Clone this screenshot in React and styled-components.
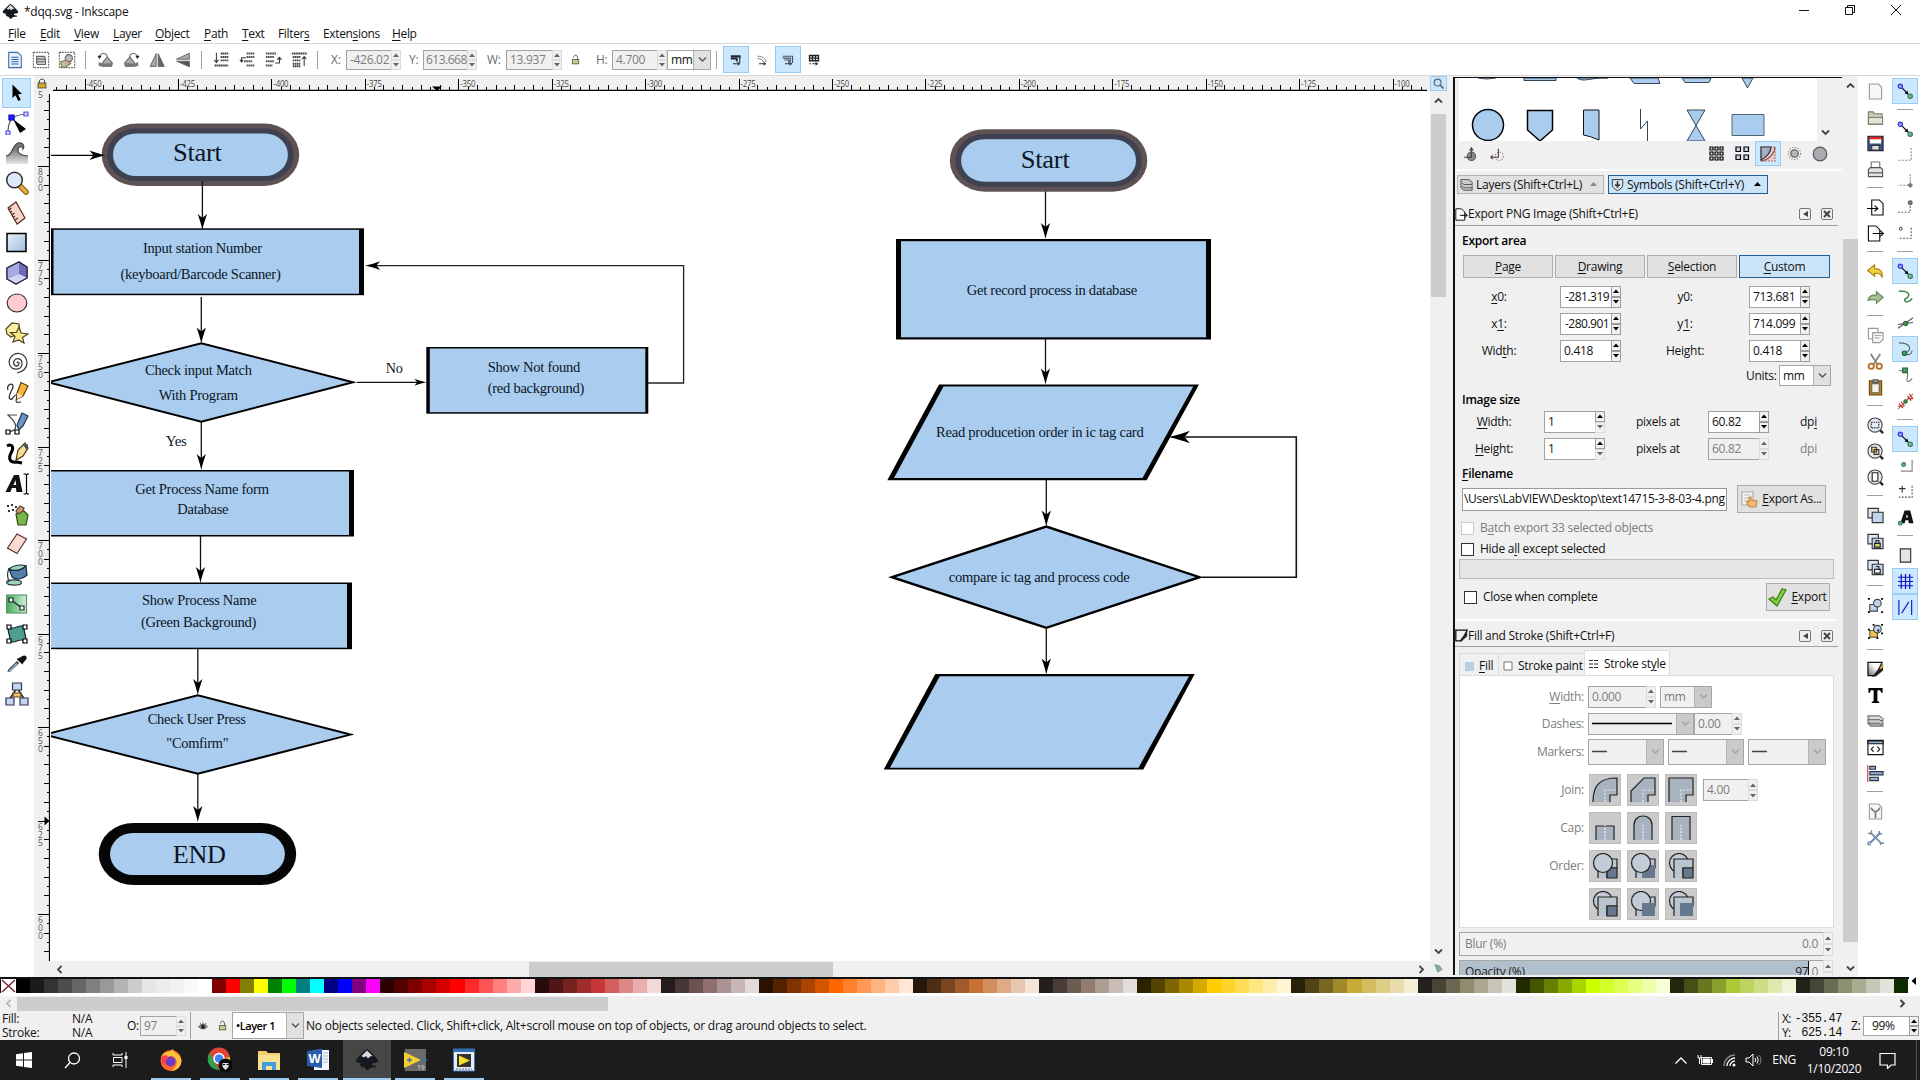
import React from "react";
import styled, { createGlobalStyle, css } from "styled-components";

const UI = '"Open Sans", "Noto Sans", sans-serif';
const BLUE = "#aaccee";

const Global = createGlobalStyle`
  * { box-sizing: border-box; }
  body { margin: 0; background: #fff; overflow: hidden; }
  svg { display: block; flex: none; }
  u { text-decoration-thickness: 1px; text-underline-offset: 2px; }
`;

const Window = styled.div`
  width: 1920px;
  height: 1080px;
  display: flex;
  flex-direction: column;
  overflow: hidden;
  background: #fff;
  font: 12px/16px ${UI};
  letter-spacing: -0.26px;
  color: #111;
  white-space: pre;
`;

/* ---------- title, menu, tool controls ---------- */
const TitleBar = styled.div`
  height: 23px;
  display: flex;
  align-items: center;
  padding-left: 2px;
  gap: 5px;
`;
const WindowButtons = styled.div`
  margin-left: auto;
  margin-right: 18px;
  display: flex;
  gap: 34px;
  padding-bottom: 3px;
`;
const MenuBar = styled.div`
  height: 21px;
  display: flex;
  align-items: center;
  padding: 2px 0 0 8px;
  border-bottom: 1px solid #d7d7d7;
`;
const MenuItem = styled.span`
  width: ${(p) => p.$w}px;
  letter-spacing: -0.35px;
`;
const ControlsBar = styled.div`
  height: 32px;
  display: flex;
  align-items: center;
  border-bottom: 1px solid #d7d7d7;
  padding-left: 2px;
  color: #6d6d6d;
`;
const ToolCell = styled.div`
  width: 26px;
  height: 27px;
  display: flex;
  align-items: center;
  justify-content: center;
  flex: none;
  ${(p) => p.$on && css`background: #cce8ff; border: 1px solid #99cdf5;`}
`;
const VSep = styled.div`
  width: 1px;
  height: ${(p) => p.$h || 18}px;
  background: #a0a0a0;
  margin: 0 ${(p) => p.$r ?? 6}px 0 ${(p) => p.$l ?? 6}px;
  flex: none;
`;
const FieldLabel = styled.span`
  width: ${(p) => p.$w}px;
  flex: none;
`;

/* ---------- generic fields ---------- */
const SpinBox = styled.div`
  display: flex;
  flex: none;
  height: ${(p) => p.$h || 22}px;
`;
const SpinText = styled.div`
  width: ${(p) => p.$w}px;
  height: 100%;
  display: flex;
  align-items: center;
  padding-left: ${(p) => p.$pad ?? 3}px;
  letter-spacing: ${(p) => (p.$tight ? -0.5 : -0.3)}px;
  border: 1px solid #a2a2a2;
  border-right: none;
  background: ${(p) => (p.$off ? "#f0f0f0" : "#fff")};
  color: ${(p) => (p.$off ? "#7d7d7d" : "#111")};
`;
const SpinCol = styled.div`
  width: 10px;
  display: flex;
  flex-direction: column;
  height: 100%;
`;
const SpinBtn = styled.div`
  flex: 1;
  display: flex;
  align-items: center;
  justify-content: center;
  background: #f0f0f0;
  border: 1px solid ${(p) => (p.$off ? "#dcdcdc" : "#9c9c9c")};
  color: ${(p) => (p.$off ? "#666" : "#000")};
`;
const Up = () => <svg width="6" height="4"><path d="M0 4L3 0.5L6 4z" fill="currentColor" /></svg>;
const Down = () => <svg width="6" height="4"><path d="M0 0L3 3.5L6 0z" fill="currentColor" /></svg>;
function Spin({ w, h, v, off, pad, downOff, tight }) {
  return (
    <SpinBox $h={h}>
      <SpinText $w={w} $off={off} $pad={pad} $tight={tight}>{v}</SpinText>
      <SpinCol>
        <SpinBtn $off={off}><Up /></SpinBtn>
        <SpinBtn $off={off || downOff}><Down /></SpinBtn>
      </SpinCol>
    </SpinBox>
  );
}
const ComboBox = styled.div`
  display: flex;
  flex: none;
  width: ${(p) => p.$w}px;
  height: ${(p) => p.$h}px;
  border: 1px solid #a6a6a6;
  background: ${(p) => (p.$off ? "#f0f0f0" : "#fff")};
  color: ${(p) => (p.$off ? "#7d7d7d" : "#111")};
`;
const ComboText = styled.div`
  flex: 1;
  display: flex;
  align-items: center;
  padding-left: 3px;
`;
const ComboBtn = styled.div`
  width: ${(p) => p.$w || 17}px;
  display: flex;
  align-items: center;
  justify-content: center;
  background: ${(p) => (p.$off ? "#cacaca" : "#e1e1e1")};
  border-left: 1px solid #b4b4b4;
  color: ${(p) => (p.$off ? "#a0a0a0" : "#555")};
`;
const Chevron = ({ d = "down", w = 1.4, s = 9 }) => {
  const r = { down: 0, up: 180, left: 90, right: 270 }[d];
  return <svg width={s} height={s} viewBox="0 0 9 9"><path d="M1 2.5L4.5 6L8 2.5" transform={`rotate(${r} 4.5 4.5)`} fill="none" stroke="currentColor" strokeWidth={w} /></svg>;
};
function Combo({ w, h, off, children, bw }) {
  return (
    <ComboBox $w={w} $h={h} $off={off}>
      <ComboText>{children}</ComboText>
      <ComboBtn $off={off} $w={bw}><Chevron /></ComboBtn>
    </ComboBox>
  );
}
const Bold = styled.b`
  font-weight: 600;
  color: #000;
  font-size: ${(p) => (p.$small ? 11 : 12)}px;
  letter-spacing: ${(p) => (p.$small ? -0.45 : -0.26)}px;
`;

/* ---------- icons ---------- */
const Ic = ({ s = 20, v = 20, children }) => (
  <svg width={s} height={s} viewBox={`0 0 ${v} ${v}`} fill="none" stroke="#222" strokeWidth="1.2">{children}</svg>
);
const InkLogo = ({ s = 16 }) => (
  <svg width={s} height={s} viewBox="0 0 24 24">
    <path d="M12 1C9 3 2 10 1 12.500C0.500 14.500 4 15 6 15.500C8 16.500 5 17 6 18.500C8 20 9 18.500 10 20C11 22.500 13 23 14 21C15 19.500 18 20 19 18.500C19 17 15.500 17 17 15.500C19.500 15 23.500 14.500 23 12.500C22 10 15 3 12 1z" fill="#15181c" />
    <path d="M12 2.500L6.500 8L9 9.500L11 8L13 10.500L15 8.500L17.500 8z" fill="#d4dbe4" />
    <path d="M5 16.500h3M17 18.500h4" stroke="#15181c" strokeWidth="1.500" />
  </svg>
);

const toolIcons = [
  <Ic><path d="M5.500 1.500L5.500 15L8.500 12.300L11.300 18L13.800 16.800L11 11.300L15 11z" fill="#000" stroke="none" /></Ic>,
  <Ic s={24} v={24}><path d="M3 22C3 12 5 4 21 3" stroke="#555" /><path d="M4 4h5v5h-5z" fill="#22f" stroke="#00c" /><path d="M1 20h4v4h-4zM19 1h4v4h-4z" fill="#ccf" stroke="#55d" /><path d="M8 8L21 18L15 22z" fill="#000" stroke="none" /></Ic>,
  <Ic s={24} v={24}><path d="M1 15C8 15 6 5 13 2C18 1 20 5 18 8C18 5 14 5 13 8C12 12 17 15 23 15V23H1z" fill="url(#tweak)" stroke="none" /><path d="M1 15C8 15 6 5 13 2C18 1 20 5 18 8C18 5 14 5 13 8C12 12 17 15 23 15" stroke="#444" /><defs><linearGradient id="tweak" x1="0" y1="0" x2="0" y2="1"><stop offset="0.300" stopColor="#777" /><stop offset="1" stopColor="#e6e6e6" /></linearGradient></defs></Ic>,
  <Ic s={24} v={24}><path d="M15 15L21 21" stroke="#7a5a10" strokeWidth="5.500" strokeLinecap="round" /><path d="M15.500 15.500L21 21" stroke="#eda93a" strokeWidth="3.500" strokeLinecap="round" /><circle cx="9.500" cy="9" r="7.800" fill="#dbe9f8" stroke="#333" strokeWidth="1.500" /></Ic>,
  <Ic s={24} v={24}><path d="M3 7L11 1L20 17L12 23z" fill="#f8d6ca" stroke="#5a2d20" /><path d="M3.500 9l3-2M5 11.500l2-1.500M6.500 14l3-2M8 16.500l2-1.500M10 19l3-2" stroke="#5a2d20" /></Ic>,
  <Ic s={22} v={22}><rect x="1" y="1.500" width="19" height="18" fill="url(#rg)" stroke="#000" strokeWidth="1.500" /><defs><linearGradient id="rg" x1="0" y1="0" x2="1" y2="1"><stop offset="0" stopColor="#e8f0f8" /><stop offset="1" stopColor="#9dbcdc" /></linearGradient></defs></Ic>,
  <Ic s={24} v={24}><path d="M2 7L14 1L22 6V17L11 23L2 18z" fill="#9a9ad8" stroke="#223" /><path d="M14 1L22 6V17L14 13z" fill="#6c6cb8" stroke="none" /><path d="M2 18L14 13L22 17L11 23z" fill="#d4d4f6" stroke="none" /><path d="M2 7L14 1L14 13L2 18z" fill="#a9a9e0" stroke="none" /><path d="M2 7L14 1L22 6V17L11 23L2 18z" stroke="#223" /></Ic>,
  <Ic s={22} v={22}><ellipse cx="11" cy="11" rx="9.800" ry="9" fill="#ffcad2" stroke="#333" /></Ic>,
  <Ic s={24} v={24}><path d="M1 8L7 2L14 3L15 12L6 16L2 13z" fill="#fbf0a0" stroke="#4a4420" /><path d="M14 6L16 12L23 13L17.500 16.500L19 22L13.500 19L8 21L10 15.500L5.500 11.500L11.500 11.500z" fill="#fbe88a" stroke="#4a4420" /></Ic>,
  <Ic s={22} v={22}><path d="M11 11C12 9 14 11 12.500 13C10 15.500 6.500 12.500 8 9C10 5 16.500 6.500 16 12C15.500 18 7 19 4 13.500C1 7 7 1 13 1.500C18 2 21 6 21 11C21 16 17 20 11 21" stroke="#333" /></Ic>,
  <Ic s={24} v={24}><path d="M3 9C1 3 9 1 8 6C7 10 2 16 5 18C8 20 9 12 12 14C12 20 8 22 16 21" stroke="#222" /><path d="M12 12L16 1.500L23 5L18 15L12 18z" fill="#f6b73c" stroke="#5c3a08" /><path d="M12 12l6 3l-6 3z" fill="#fbe3bd" stroke="none" /></Ic>,
  <Ic s={24} v={24}><path d="M2 20C14 19 13 12 3 3H12" stroke="#444" /><path d="M1 18h4v4h-4zM10 18h4v4h-4z" fill="#fff" stroke="#000" /><path d="M12 13L17 1L23 4L18 14L14 18z" fill="#6a94c2" stroke="#20364f" /></Ic>,
  <Ic s={24} v={24}><path d="M2 4C8 1 9 6 6 11C3 17 5 21 12 20L17 21" stroke="#000" strokeWidth="3" /><path d="M11 18L13 8L20 1L23 6L18 14z" fill="#f7dd94" stroke="#4a3408" /><path d="M18 3l4 5l1-6z" fill="#33506e" stroke="none" /></Ic>,
  <Ic s={24} v={24}><path d="M9 3h5l3.500 17h-6l-.600-4h-4l-1.500 4H0.500zM10.500 8L8.400 13h2.800z" fill="#111" stroke="none" fillRule="evenodd" /><path d="M18.500 2h2l1 1l1-1h1.500M21.500 3V21M18.500 22h2l1-1l1 1h1.500" stroke="#000" /></Ic>,
  <Ic s={24} v={24}><path d="M2 3h2v2h-2zM6 2h2v2h-2zM10 4h2v2h-2zM3 8h2v2h-2zM7 7h2v2h-2z" fill="#333" stroke="none" /><path d="M11 12L18 8L23 13L21 23H13z" fill="#79b648" stroke="#2b4a14" /><path d="M11 9L15 4L19 6L18 9L13 12z" fill="#d59a6b" stroke="#543" /></Ic>,
  <Ic s={24} v={24}><path d="M2.500 16L12 2L21.500 7L12 21.500z" fill="#fbdcd2" stroke="#5a3328" /></Ic>,
  <Ic s={24} v={24}><ellipse cx="9" cy="20.500" rx="7.500" ry="2.600" fill="#9fd4b8" stroke="#234" /><path d="M4 7C10 10 16 8 21 4L22 13C17 18 11 18 7 15z" fill="#527fa9" stroke="#162b40" /><path d="M4 7C8 3 16 2 21 4C17 8 10 10 4 7z" fill="#9cd0b7" stroke="#162b40" /><path d="M4 7C1 12 3 16 4 20" stroke="#234" /></Ic>,
  <Ic s={22} v={22}><rect x="0.500" y="2" width="20" height="18" fill="url(#gg)" stroke="#5a9a6a" /><path d="M5 7L16 15" stroke="#222" /><path d="M3 5h4v4h-4zM14 13h4v4h-4z" fill="#fff" stroke="#222" /><defs><linearGradient id="gg"><stop offset="0" stopColor="#3fa85a" /><stop offset="1" stopColor="#d5f0da" /></linearGradient></defs></Ic>,
  <Ic s={22} v={22}><path d="M3 4C9 8 13 0 19 4C16 9 22 13 19 18C13 14 9 22 3 18C6 13 0 9 3 4z" fill="#4f9f8c" stroke="#123" /><path d="M1 2h4v4h-4zM17 2h4v4h-4zM1 16h4v4h-4zM17 16h4v4h-4z" fill="#fff" stroke="#000" /></Ic>,
  <Ic s={24} v={24}><path d="M4 20C4 17 9 15 13 10" stroke="#345" strokeWidth="3" /><path d="M4 20C5.500 17 9 15 12 11.500" stroke="#9ab8d4" strokeWidth="1.500" /><path d="M11.500 7l6 5.500l1-2l3-3.500c1-3-2-4.500-4-3l-3.500 2z" fill="#111" stroke="none" /></Ic>,
  <Ic s={24} v={24}><path d="M12 6L4 18M12 6L20 18" stroke="#222" strokeWidth="1.500" /><path d="M7.500 1h9v7h-9zM1 16h8v7h-8zM15 16h8v7h-8z" fill="#c2d6f0" stroke="#335" /><path d="M8 11h8v4h-8z" fill="#f4c35e" stroke="#543" /></Ic>,
];

const G = "#666";
const ctlIcons = {
  page: <Ic s={18}><path d="M3 1.500h10l4 4v13H3z" fill="#e8f1fb" stroke="#3b6ea8" /><path d="M6 7h8M6 9.500h8M6 12h8M6 14.500h8" stroke="#2b62ab" /></Ic>,
  sel1: <Ic s={18}><path d="M1.500 1.500h17v17h-17z" stroke={G} strokeDasharray="2 1" /><path d="M5 6h9l1 3v6H6l-1-2zM5 9h10M5 12h10" stroke={G} fill="#ccc" /></Ic>,
  sel2: <Ic s={18}><path d="M1.500 1.500h17v17h-17z" stroke={G} strokeDasharray="2 1" /><circle cx="12" cy="8" r="4" fill="#bbb" stroke={G} /><path d="M3 12l6-2l5 4l-6 4H4z" fill="#c9b897" stroke="#775" /></Ic>,
  rotL: <Ic s={17}><path d="M3 8C3 2 12 1 12 7L12 10" stroke={G} /><path d="M0.500 5.500h5l-2.500 4z" fill="#222" stroke="none" /><path d="M7 13L12 7L18 14L17 18H6z" fill="#aaa" stroke={G} /><path d="M2 18L2 13L7 15L18 14L18 18z" fill="#777" stroke="none" /></Ic>,
  rotR: <Ic s={17}><path d="M17 8C17 2 8 1 8 7L8 10" stroke={G} /><path d="M14.500 5.500h5l-2.500 4z" fill="#222" stroke="none" /><path d="M13 13L8 7L2 14L3 18H14z" fill="#aaa" stroke={G} /><path d="M18 18L18 13L13 15L2 14L2 18z" fill="#777" stroke="none" /></Ic>,
  flipH: <Ic s={16}><path d="M9 2V18H1.500z" fill="#aaa" stroke={G} /><path d="M11.500 2V18H19z" fill="#666" stroke={G} /></Ic>,
  flipV: <Ic s={16}><path d="M18 9H2L18 1.500z" fill="#aaa" stroke={G} /><path d="M18 11.500H2L18 18.500z" fill="#555" stroke={G} /></Ic>,
  low2: <Ic s={17}><path d="M9 3h9M9 7h9M9 11h9M2 17h16" stroke="#444" strokeWidth="2.200" strokeDasharray="2 .5" /><path d="M4 2v11M1.500 10.500L4 13.500L6.500 10.500" stroke="#333" /></Ic>,
  low1: <Ic s={17}><path d="M9 3h9M9 7h9M6 12h10M9 17h9" stroke="#555" strokeWidth="2.200" strokeDasharray="2 .5" /><path d="M8 8H3V12M1 10.500L3 13L5 10.500" stroke="#333" /></Ic>,
  up1: <Ic s={17}><path d="M1 3h12M1 7h10M1 12h10M1 17h8" stroke="#555" strokeWidth="2.200" strokeDasharray="2 .5" /><path d="M12 14h5V8M14.500 10.500L17 7.500L19.500 10.500" stroke="#333" /></Ic>,
  up2: <Ic s={17}><path d="M1 3h18M2 7h9M2 11h9M2 15h9M2 18h9" stroke="#444" strokeWidth="2.200" strokeDasharray="2 .5" /><path d="M15.500 18V7M13 9.500L15.500 6.500L18 9.500" stroke="#333" /></Ic>,
  lock: <Ic s={11} v={14}><rect x="3" y="7" width="8" height="5.500" fill="#cfc890" stroke="#665" /><path d="M4.500 4.500C4.500 0.500 9.500 0.500 9.500 4V7" stroke="#554" /></Ic>,
  sc1: <Ic s={12} v={16}><path d="M1 3h12v3M1 6h8v4" stroke="#223" strokeWidth="2.400" /><path d="M4 13h8M10 11l3 2l-3 2M13 6v6" stroke="#111" /></Ic>,
  sc2: <Ic s={12} v={16}><path d="M2 3C8 3 13 5 13 11M2 6C7 6 9 8 10 11" stroke="#777" /><path d="M4 13h8M10 11l3 2l-3 2" stroke="#111" /></Ic>,
  sc3: <Ic s={12} v={16}><path d="M1 3h13v9M1 5.500h10v5M3 8h6v4" stroke="#456" strokeWidth="1.600" /><path d="M4 13h8M10 11l3 2l-3 2" stroke="#111" /></Ic>,
  sc4: <Ic s={12} v={16}><path d="M2 2h12v7h-12zM2 5.500h12M6 2v7M10 2v7" stroke="#222" strokeWidth="1.800" /><path d="M2 13h2M6 13h6M10 11l3 2l-3 2" stroke="#111" /></Ic>,
};

const C = (children, s = 17) => <Ic s={s} v={18}>{children}</Ic>;
const mag = (inner) => C(<><path d="M13 13L17 17" stroke="#222" strokeWidth="2.500" /><circle cx="8.500" cy="8.500" r="7.500" fill="#e4ebf4" stroke="#444" />{inner}</>);
const cmdIcons = [
  C(<path d="M2.500 1h9.500l3.500 3.500V17h-13z" fill="#f6f6f6" stroke="#999" />),
  C(<><path d="M1.500 3h5l1.500 2h8v11h-14.500z" fill="#c6cdb4" stroke="#7a8070" /><path d="M1.500 9h15v7h-15z" fill="#dfe6d2" stroke="#7a8070" /></>),
  C(<><path d="M1 1.500h16v15h-16z" fill="#34568a" stroke="#223" /><path d="M3 2h12v7h-12z" fill="#fff" stroke="none" /><path d="M2 2h14v2.500h-14z" fill="#d22" stroke="none" /><path d="M5 11h8v5h-8z" fill="#ddd" stroke="#333" /></>),
  C(<><path d="M4.500 1h9v7h-9z" fill="#fff" stroke="#777" /><path d="M1.500 9l2-2h11l2 2v7.500h-15z" fill="#e3e3e3" stroke="#555" /><path d="M2 12.500h14" stroke="#555" /></>),
  null,
  C(<><path d="M5 1h8l4 4V17H5z" fill="#fff" stroke="#111" /><path d="M0 10h11M8 7l3.500 3l-3.500 3" stroke="#000" /></>),
  C(<><path d="M1.500 1h8l4 4V17h-12z" fill="#fff" stroke="#111" /><path d="M6 9h11M14 6l3.500 3l-3.500 3" stroke="#000" /></>),
  null,
  C(<path d="M0.800 8L8 2V6C14 6 17 9 16 15.500C15 11.500 12 10.500 8 11V14z" fill="#f2d13c" stroke="#a78413" />),
  C(<path d="M17.200 9L10 3V6.500C5 6 2 7 1 12C4 11 7 11 10 12V15z" fill="#a5bf96" stroke="#6d8a60" />),
  null,
  C(<><path d="M1.500 1.500h10v11h-10z" fill="#fff" stroke="#999" /><path d="M6 6h11v7l-3.500 3.500H6z" fill="#f5f5f5" stroke="#999" /><path d="M8 9h7M8 11.500h5" stroke="#aaa" /></>),
  C(<><path d="M4 1L11 12M14 1L7 12" stroke="#888" strokeWidth="2" /><circle cx="4.500" cy="14" r="2.800" stroke="#b5722a" strokeWidth="2" /><circle cx="13" cy="14" r="2.800" stroke="#b5722a" strokeWidth="2" /></>),
  C(<><path d="M2.500 2h13v15h-13z" fill="#b98226" stroke="#6d4a10" /><path d="M5 5h8v9.500h-8z" fill="#f5f2ea" stroke="#665" /><path d="M6.500 0.800h5v3h-5z" fill="#999" stroke="#555" /></>),
  null,
  mag(<path d="M4.500 5.500h8v6h-8z" strokeDasharray="1.500 1" stroke="#222" />),
  mag(<path d="M5 4.500h5v5h-5zM7.500 7h5v5h-5z" fill="#f3d88c" stroke="#333" />),
  mag(<path d="M5.500 4h6v9h-6z" fill="#fff" stroke="#222" />),
  null,
  C(<><path d="M1 1.500h11v10h-11z" fill="#dce7f5" stroke="#333" /><path d="M5.500 5.500h11.500v11h-11.500z" fill="#c2d5ee" stroke="#333" /></>),
  C(<><path d="M1 1.500h11v10h-11z" fill="#dce7f5" stroke="#333" /><path d="M5.500 5.500h11.500v11h-11.500z" fill="#c2d5ee" stroke="#333" /><path d="M8 11h6v4h-6z" fill="#ddd66a" stroke="#222" /><path d="M9.500 11V8h3V11" stroke="#222" /></>),
  C(<><path d="M1 1.500h11v10h-11z" fill="#dce7f5" stroke="#333" /><path d="M5.500 5.500h11.500v11h-11.500z" fill="#c2d5ee" stroke="#333" /><path d="M8 11h6v4h-6z" fill="#fff" stroke="#222" /><path d="M12.500 11V8h-3" stroke="#222" /></>),
  null,
  C(<><path d="M3 8h8v7h-8z" fill="#c2d5ee" stroke="#444" /><circle cx="11" cy="6.500" r="4" fill="#c2d5ee" stroke="#444" /><path d="M1 1h2v2H1zM15 1h2v2h-2zM1 15h2v2H1zM15 15h2v2h-2z" fill="#000" stroke="none" /></>),
  C(<><path d="M3 8h8v7h-8z" fill="#f5c74a" stroke="#654" /><circle cx="11" cy="6.500" r="4" fill="#c2d5ee" stroke="#444" /><path d="M1 6h2v2H1zM11 7h2v2h-2zM1 15h2v2H1zM10 15h2v2h-2zM6 1h2v2H6zM15 1h2v2h-2zM15 10h2v2h-2z" fill="#000" stroke="none" /></>),
  null,
  C(<><path d="M1 1.500h15L9 15.500H1z" fill="url(#fs)" stroke="#111" strokeWidth="1.300" /><path d="M5 17L17 3V10L10 16z" fill="#222" stroke="none" /><path d="M14 8l3-3" stroke="#e5a93a" strokeWidth="2" /><defs><linearGradient id="fs" x1="0" y1="1" x2="1" y2="0"><stop offset="0" stopColor="#666" /><stop offset="0.600" stopColor="#fff" /></linearGradient></defs></>),
  C(<path d="M1.500 1h15v5h-1.500l-1-2.500H11v11.500l2 .700v1.300H5v-1.300l2-.700V3.500H4L3 6H1.500z" fill="#000" stroke="none" />),
  C(<><path d="M1 3h12l4 3v2H4L1 5z" fill="#ddd" stroke="#777" /><path d="M1 7h12l4 3v2H4L1 9z" fill="#ccc" stroke="#777" /><path d="M1 11h12l4 3H4z" fill="#aaa" stroke="#777" /></>),
  C(<><path d="M1 1.500h16v15h-16z" fill="#fff" stroke="#111" /><path d="M1 2h16v3H1z" fill="#8fb0d6" stroke="#111" /><path d="M7 8L4.500 10.800L7 13.500M11 8L13.500 10.800L11 13.500" /></>),
  C(<><path d="M0.800 0V18" stroke="#d03040" /><path d="M3 1.500h6v3H3zM3 7h14v3.500H3zM3 13h9v3.500H3z" fill="#9ab2d0" stroke="#234" /></>),
  null,
  C(<><path d="M2.500 1h9.500l3.500 3.500V17h-13z" fill="#f6f6f6" stroke="#999" /><path d="M4.500 5C5 9 9 8 9 10V16M13.500 5C13 9 9 8 9 10" stroke="#777" strokeWidth="1.800" /></>),
  C(<><path d="M4 4L15 15" stroke="#8a9aa8" strokeWidth="2.200" /><path d="M14 4L3 15" stroke="#6c8cb8" strokeWidth="2.200" /><path d="M1 4.500l3 .5l1-3.500M13 2l0 3l3 0M2 13l-1 3l3 1M14 17l1-2l3 0" stroke="#789" strokeWidth="1.500" /></>),
];

const nodes = <><path d="M5 5L12 12" stroke="#000" /><path d="M12 12l-4-1l3-3z" fill="#000" stroke="none" /><circle cx="3.500" cy="3.500" r="2.300" fill="#99f" stroke="#33d" /><circle cx="14" cy="14" r="2.300" fill="#7b9" stroke="#375" /></>;
const snapIcons = [
  [C(nodes), 1], null,
  [C(nodes)], [C(<path d="M15 1V14H1" stroke="#888" strokeDasharray="2 1.500" />)],
  [C(<><path d="M14 1V13H1" stroke="#888" strokeDasharray="2 1.500" /><path d="M14 10l3 3l-3 3l-3-3z" fill="#777" stroke="none" /></>)],
  [C(<><path d="M14 4V14H1" stroke="#666" strokeDasharray="2 1.500" /><circle cx="14" cy="4" r="2" fill="#889" stroke="#556" /></>)],
  [C(<><path d="M15 3V14H1" stroke="#555" strokeDasharray="2 1.500" /><circle cx="4" cy="4" r="1.500" stroke="#567" /></>)], null,
  [C(nodes), 1],
  [C(<path d="M2 2C14 2 15 7 8 11C8 15 14 14 16 10" stroke="#3a8a4a" strokeWidth="1.600" />)],
  [C(<><path d="M1 14L17 3M1 10L17 8" stroke="#555" /><circle cx="9" cy="9" r="2.200" fill="#4a9a5a" stroke="#263" /></>)],
  [C(<><path d="M2 2C14 2 17 9 9 13C12 16 16 14 16 10" stroke="#567" /><circle cx="8" cy="13" r="2.400" fill="#4a9a7a" stroke="#263" /></>), 1],
  [C(<><path d="M2 4H9C15 8 8 13 11 15C13 16 15 14 16 12" stroke="#777" /><path d="M6 1h5v5h-5z" fill="#4a9a6a" stroke="#263" /></>)],
  [C(<><path d="M1 17L17 1" stroke="#888" /><path d="M2 11l4 5M4 9l4 5M1 14h6M11 3l4 5M13 1l4 5M11 6h6" stroke="#c33" /><circle cx="9" cy="9" r="1.800" fill="#4a9a5a" stroke="#263" /></>)], null,
  [C(nodes), 1],
  [C(<><path d="M16 3V15H4" stroke="#888" /><circle cx="7" cy="8" r="2" fill="#6b8" stroke="#375" /></>)],
  [C(<><path d="M16 3V15H2" stroke="#555" strokeDasharray="2 1.500" /><path d="M2 6h7M5.500 3v7" stroke="#333" /></>)],
  [C(<><path d="M8 1.500h6L17.500 15h-5l-.500-3h-3L8 15H3.500zM10.500 5.500L9.500 9H11.800z" fill="#111" stroke="none" fillRule="evenodd" /><circle cx="3.500" cy="15" r="2" fill="#6b8" stroke="#375" /></>)], null,
  [C(<path d="M3.500 2h11v14h-11z" fill="#e4e4e4" stroke="#333" />)],
  [C(<path d="M1 4.500h16M1 9h16M1 13.500h16M4.500 1v16M9 1v16M13.500 1v16" stroke="#11c" strokeWidth="1.300" />), 1],
  [C(<path d="M2 1v16M15.500 1v16M5 15L12.500 3" stroke="#22b" strokeWidth="1.300" />), 1],
];

/* ---------- workspace ---------- */
const Workspace = styled.div`
  height: 901px;
  display: flex;
  background: #f0f0f0;
  flex: none;
  overflow: hidden;
`;
const ToolBox = styled.div`
  width: 34px;
  background: #fff;
  padding: 2px 0 0 2px;
  flex: none;
`;
const ToolSlot = styled.div`
  width: 29px;
  height: 30px;
  margin-bottom: 0.05px;
  display: flex;
  align-items: center;
  justify-content: center;
  ${(p) => p.$on && css`background: #cce8ff; border: 1px solid #99cdf5;`}
`;
const CanvasColumn = styled.div`
  width: 1396px;
  display: flex;
  flex-direction: column;
  flex: none;
`;
const CanvasRow = styled.div`
  display: flex;
  height: 870px;
`;
const Sheet = styled.div`
  width: 1380px;
  height: 870px;
  padding-left: 1px;
  background: #fff;
`;
const HScroll = styled.div`
  height: 16px;
  display: flex;
  align-items: center;
  color: #444;
  padding-left: ${(p) => p.$l || 0}px;
`;
const Gap = styled.div`
  width: ${(p) => p.$w || 0}px;
  height: ${(p) => p.$h || 0}px;
  flex: none;
`;
const Thumb = styled.div`
  width: ${(p) => p.$w}px;
  height: ${(p) => p.$h}px;
  background: #cdcdcd;
  flex: none;
`;
const VScroll = styled.div`
  width: ${(p) => p.$w}px;
  display: flex;
  flex-direction: column;
  align-items: center;
  flex: none;
  color: #444;
`;
const ZoomToggle = styled.div`
  width: 17px;
  height: 15px;
  background: #cce8ff;
  border: 1px solid #99cdf5;
  display: flex;
  align-items: center;
  justify-content: center;
`;

function TopRuler() {
  const ticks = [];
  const P = 93.43;
  for (let i = -3; i < 147; i++) {
    const x = 84.5 - 34 + (i * P) / 10;
    if (x < 20 || x > 1392) continue;
    const m = ((i % 10) + 10) % 10;
    ticks.push(<path key={i} d={`M${Math.round(x) + 0.5} 14V${m === 0 ? 3 : m % 2 === 0 ? 9 : 11}`} />);
  }
  return (
    <svg width="1396" height="15">
      <g stroke="#000">{ticks}<path d="M19 14.500H1393" strokeWidth="1.400" /></g>
      <g fontFamily={UI} fontSize="9" fill="#444">
        {Array.from({ length: 15 }, (_, i) => <text key={i} x={84.5 - 34 + i * P + 2} y="11" textLength="15" lengthAdjust="spacingAndGlyphs">{-450 + i * 25}</text>)}
      </g>
      <path d="M398 10.500h10l-5 4.500z" fill="#000" />
      <rect x="4" y="7" width="8" height="5" fill="#cfa52c" stroke="#443" strokeWidth="0.800" />
      <path d="M5.500 7V5C5.500 2.500 10.500 2.500 10.500 5V7" fill="none" stroke="#443" />
    </svg>
  );
}
function SideRuler() {
  const P = 93.5, ticks = [], labels = [];
  for (let i = -7; i < 86; i++) {
    const y = 166 - 91 + (i * P) / 10;
    if (y < 3 || y > 868) continue;
    const m = ((i % 10) + 10) % 10;
    ticks.push(<path key={i} d={`M16 ${Math.round(y) + 0.5}H${m === 0 ? 4 : m % 2 === 0 ? 10 : 13}`} />);
  }
  for (let k = -1; k < 9; k++) {
    String(800 - k * 25).split("").forEach((c, j) => {
      const y = 166 - 91 + k * P + 9 + j * 8;
      if (y > 3) labels.push(<text key={k + "-" + j} x="4" y={y}>{c}</text>);
    });
  }
  return (
    <svg width="16" height="870" overflow="visible">
      <g stroke="#000">{ticks}<path d="M15.500 3V870" strokeWidth="1.200" /></g>
      <g fontFamily={UI} fontSize="8.500" fill="#555">{labels}</g>
      <path d="M10.500 725.500v9l5-4.500z" fill="#000" />
    </svg>
  );
}

/* flow chart on the drawing canvas */
const Head = ({ x, y, r = 0, s = 1 }) => (
  <path transform={`translate(${x} ${y}) rotate(${r}) scale(${s})`} d="M0 0.500C-1.200 -5 -3 -11 -4.700 -15.500L0 -11.500L4.700 -15.500C3 -11 1.200 -5 0 0.500z" fill="#000" />
);
const Arrow = ({ x, y1, y2 }) => <><path d={`M${x} ${y1}V${y2 - 8}`} stroke="#111" strokeWidth="1.300" /><Head x={x} y={y2} /></>;
const Txt = ({ a, b, y, s = 14, children }) => (
  <text x={a} y={y} textLength={b - a} lengthAdjust="spacingAndGlyphs" fontSize={s} fill="#0a1626">{children}</text>
);
const Pill = ({ x, y, w, h, outer, mid }) => (
  <>
    <rect x={x} y={y} width={w} height={h} rx="35" ry={h / 2} fill={outer} />
    <rect x={x + 5.500} y={y + 5} width={w - 11} height={h - 10} rx="28" ry={h / 2 - 5} fill={mid} />
    <rect x={x + 11.300} y={y + 10} width={w - 22.600} height={h - 20} rx="23" ry={h / 2 - 10} fill={BLUE} />
  </>
);
const Box = ({ x1, x2, y1, y2, l = 5, r = 5, t = 1.5 }) => (
  <>
    <rect x={x1} y={y1} width={x2 - x1} height={y2 - y1} fill="#000" />
    <rect x={x1 + l} y={y1 + t} width={x2 - x1 - l - r} height={y2 - y1 - 2 * t} fill={BLUE} />
  </>
);
function Chart() {
  return (
    <svg width="1379" height="870" viewBox="51 91 1379 870" fontFamily='"Liberation Serif", serif' fill="none" strokeMiterlimit="12">
      <path d="M51 155.300H96" stroke="#000" strokeWidth="1.300" />
      <Pill x={101.700} y={123.500} w={197.500} h={62.500} outer="#5f5255" mid="#3e4150" />
      <Head x={105} y={155.300} r={-90} />
      <Txt a={173} b={221.700} y={161} s={25.500}>Start</Txt>
      <Arrow x={202.400} y1={181} y2={229.500} />
      <Box x1={51} x2={364} y1={228.300} y2={295.200} l={2.500} />
      <Txt a={143} b={261.700} y={252.700}>Input station Number</Txt>
      <Txt a={120.400} b={280.500} y={279}>(keyboard/Barcode Scanner)</Txt>
      <Arrow x={201.300} y1={297} y2={343} />
      <path d="M48 382.300L201.300 343.200L353 382.300L201.300 421.600z" fill={BLUE} stroke="#000" strokeWidth="2" />
      <Txt a={145} b={251.700} y={374.700}>Check input Match</Txt>
      <Txt a={158.700} b={237.700} y={399.700}>With Program</Txt>
      <Txt a={385.700} b={402.500} y={372.700}>No</Txt>
      <path d="M357 382.300H418" stroke="#111" strokeWidth="1.200" />
      <Head x={426} y={382.300} r={-90} s={0.750} />
      <Box x1={426.300} x2={648.300} y1={347} y2={413.700} l={3.500} r={3} />
      <Txt a={487.700} b={580} y={372}>Show Not found</Txt>
      <Txt a={487.700} b={584} y={393}>(red background)</Txt>
      <path d="M648 383H683.600V265.600H374" stroke="#222" strokeWidth="1.300" />
      <Head x={365.500} y={265.600} r={90} s={0.950} />
      <Txt a={165.700} b={186.500} y={446}>Yes</Txt>
      <Arrow x={201.300} y1={422} y2={469.500} />
      <Box x1={44} x2={354} y1={470} y2={536.500} />
      <Txt a={135.300} b={268.700} y={493.700}>Get Process Name form</Txt>
      <Txt a={177.300} b={228.300} y={514}>Database</Txt>
      <Arrow x={200.500} y1={536} y2={582.500} />
      <Box x1={42} x2={352} y1={582.500} y2={649.200} />
      <Txt a={142} b={256.300} y={605}>Show Process Name</Txt>
      <Txt a={141} b={256} y={627.300}>(Green Background)</Txt>
      <Arrow x={197.800} y1={649} y2={694.500} />
      <path d="M44.500 734.600L197.800 695.200L350.500 734.600L197.800 773.800z" fill={BLUE} stroke="#000" strokeWidth="2" />
      <Txt a={147.700} b={245.700} y={724}>Check User Press</Txt>
      <Txt a={166.300} b={228.300} y={748}>"Comfirm"</Txt>
      <Arrow x={197.800} y1={774} y2={821.500} />
      <Pill x={98.700} y={823} w={197.500} h={62} outer="#060606" mid="#060606" />
      <Txt a={172.700} b={225.700} y={862.500} s={25.500}>END</Txt>

      <Pill x={949.800} y={129.200} w={197.500} h={62.500} outer="#5f5255" mid="#3e4150" />
      <Txt a={1020.800} b={1069.500} y={168} s={25.500}>Start</Txt>
      <Arrow x={1045.500} y1={191.500} y2={238.500} />
      <Box x1={896} x2={1211} y1={239} y2={339.500} t={2.200} />
      <Txt a={966.700} b={1137} y={295.300}>Get record process in database</Txt>
      <Arrow x={1045.500} y1={339} y2={384} />
      <path d="M939 384.500H1199L1146.700 480.200H887.300z" fill="#000" />
      <path d="M943.500 386.600H1193.300L1142.500 478H894z" fill={BLUE} />
      <Txt a={936} b={1143.500} y={437.300}>Read producetion order in ic tag card</Txt>
      <Arrow x={1046.300} y1={480} y2={526} />
      <path d="M892 577.200L1046.300 526.600L1199.500 577.200L1046.300 627.800z" fill={BLUE} stroke="#000" strokeWidth="2.400" />
      <Txt a={948.700} b={1129.500} y={582}>compare ic tag and process code</Txt>
      <path d="M1202 577.200H1296.300V437H1185" stroke="#111" strokeWidth="1.600" />
      <Head x={1169} y={437} r={90} s={1.350} />
      <Arrow x={1046.300} y1={629} y2={674} />
      <path d="M935.300 674H1194.700L1143.300 769.500H883.700z" fill="#000" />
      <path d="M939.800 676.200H1189L1138.500 767.700H890z" fill={BLUE} />
    </svg>
  );
}

/* ---------- dock panel ---------- */
const Dock = styled.div`
  width: 389px;
  height: 898px;
  margin-left: 6px;
  margin-top: 1px;
  border-left: 2px solid #111;
  border-top: 1px solid #111;
  overflow: hidden;
  flex: none;
  display: flex;
  flex-direction: column;
`;
const SymbolView = styled.div`
  height: 63px;
  display: flex;
  padding-left: 4px;
  flex: none;
`;
const SymbolSheet = styled.div`
  width: 358px;
  background: #fff;
`;
const SymbolScroll = styled.div`
  flex: 1;
  display: flex;
  align-items: flex-end;
  padding: 0 0 4px 4px;
  color: #444;
`;
const IconRow = styled.div`
  height: 30px;
  display: flex;
  padding-left: 2px;
  border-bottom: 2px solid #fcfcfc;
  flex: none;
  & > div { height: 25px; }
`;
const TabRow = styled.div`
  height: 32px;
  padding: 4px 0 0 2px;
  display: flex;
  gap: 4px;
  flex: none;
`;
const DockTab = styled.div`
  width: ${(p) => p.$w}px;
  height: 19px;
  border: 1px solid ${(p) => (p.$on ? "#1f5d94" : "#b4b4b4")};
  background: ${(p) => (p.$on ? "#cce4f7" : "#e1e1e1")};
  display: flex;
  align-items: center;
  padding: 0 6px 0 2px;
  gap: ${(p) => p.$g || 3}px;
  & > svg:last-child { margin-left: auto; margin-bottom: 2px; }
`;
const PaneHead = styled.div`
  height: ${(p) => p.$h || 22}px;
  display: flex;
  align-items: center;
  border-bottom: 1px solid #a0a0a0;
  margin-right: 4px;
  flex: none;
  & > span { flex: 1; }
  & > div:last-child { margin-right: 5px; }
`;
const PaneBtn = styled.div`
  width: 12px;
  height: 12px;
  border: 1px solid #777;
  border-radius: 2px;
  margin-right: 10px;
  display: flex;
  align-items: center;
  justify-content: center;
  color: #444;
`;
const Line = styled.div`
  display: flex;
  align-items: center;
  height: ${(p) => p.$h}px;
  padding-left: ${(p) => p.$l || 0}px;
  padding-top: ${(p) => p.$t || 0}px;
  gap: ${(p) => p.$g || 0}px;
  flex: none;
`;
const Btn = styled.div`
  width: ${(p) => p.$w}px;
  height: ${(p) => p.$h}px;
  display: flex;
  align-items: center;
  justify-content: center;
  gap: 4px;
  flex: none;
  border: 1px solid ${(p) => (p.$on ? "#1f5d94" : "#adadad")};
  background: ${(p) => (p.$on ? "#cce4f7" : "#e1e1e1")};
`;
const AreaGrid = styled.div`
  display: grid;
  grid-template-columns: 88px 17px 61px 33px 62px 33px 61px;
  grid-auto-rows: 27px;
  align-items: center;
  text-align: center;
  margin-top: 5px;
  flex: none;
  & > :nth-child(4n + 1) { grid-column: 1; }
  & > :nth-child(4n + 2) { grid-column: 3; }
  & > :nth-child(4n + 3) { grid-column: 5; }
  & > :nth-child(4n + 4) { grid-column: 7; }
`;
const SizeGrid = styled.div`
  display: grid;
  grid-template-columns: 78px 11px 61px 31px 44px 28px 61px 31px 20px;
  grid-auto-rows: 27px;
  align-items: center;
  flex: none;
  & > :nth-child(5n + 1) { grid-column: 1; text-align: center; }
  & > :nth-child(5n + 2) { grid-column: 3; }
  & > :nth-child(5n + 3) { grid-column: 5; }
  & > :nth-child(5n + 4) { grid-column: 7; }
  & > :nth-child(5n + 5) { grid-column: 9; }
`;
const Dim = styled.span`
  color: ${(p) => (p.$off ? "#7d7d7d" : "inherit")};
`;
const FileEntry = styled.div`
  width: 265px;
  height: 23px;
  border: 1px solid #9a9a9a;
  background: #fff;
  display: flex;
  align-items: center;
  padding-left: 1px;
  letter-spacing: -0.3px;
`;
const Check = styled.div`
  width: 13px;
  height: 13px;
  background: #fff;
  border: 1px solid ${(p) => (p.$off ? "#ccc" : "#333")};
  flex: none;
`;
const Progress = styled.div`
  width: 375px;
  height: 20px;
  margin-left: 4px;
  border: 1px solid #bcbcbc;
  background: #e6e6e6;
  flex: none;
`;
const PaneRule = styled.div`
  height: 2px;
  background: #fcfcfc;
  margin: 8px 4px 4px 0;
  flex: none;
`;
const NoteTabs = styled.div`
  display: flex;
  align-items: flex-end;
  height: 28px;
  padding-left: 4px;
  flex: none;
`;
const NoteTab = styled.div`
  width: ${(p) => p.$w}px;
  height: ${(p) => (p.$on ? 25 : 22)}px;
  background: ${(p) => (p.$on ? "#fff" : "#f0f0f0")};
  border: 1px solid #dcdcdc;
  border-bottom: none;
  display: flex;
  align-items: center;
  padding: ${(p) => (p.$on ? 2 : 3)}px 0 0 4px;
  gap: 5px;
  margin-right: -1px;
`;
const Notebook = styled.div`
  width: 375px;
  height: 253px;
  margin-left: 4px;
  background: #fff;
  border: 1px solid #dcdcdc;
  color: #7d7d7d;
  flex: none;
  padding-top: 7px;
`;
const StyleRow = styled.div`
  display: flex;
  align-items: center;
  height: ${(p) => p.$h}px;
`;
const StyleLabel = styled.span`
  width: 124px;
  text-align: right;
  margin-right: ${(p) => p.$r ?? 4}px;
  flex: none;
`;
const Shade = styled.div`
  width: 32px;
  height: 32px;
  background: #cacaca;
  border: 1px solid #bdbdbd;
  margin-right: 6px;
  display: flex;
  align-items: center;
  justify-content: center;
  flex: none;
`;
const SliderRow = styled.div`
  width: 375px;
  height: 24px;
  margin: ${(p) => p.$t}px 0 0 4px;
  display: flex;
  flex: none;
`;
const SliderBody = styled.div`
  width: 364px;
  border: 1px solid #a6a6a6;
  border-right: none;
  display: flex;
  align-items: center;
  padding: 0 5px;
  color: ${(p) => (p.$on ? "#222" : "#7d7d7d")};
  background: ${(p) => (p.$on ? "linear-gradient(90deg,#b2bfcd 348px,#111 348px,#111 349px,#f0f0f0 349px)" : "#f0f0f0")};
  & > span { flex: 1; }
  & > i { font-style: normal; color: #7d7d7d; margin-left: 3px; }
`;

const Tri = ({ on }) => <svg width="7" height="4"><path d="M0 4L3.500 0L7 4z" fill={on ? "#000" : "#888"} /></svg>;
const Ln = () => <svg width="16" height="3"><path d="M0 1.500H15" stroke="#444" strokeWidth="1.500" /></svg>;
const shade = { fill: "#a9b3c0", stroke: "#222" };
const inner = <path d="M13 25V13H25" stroke="#e4e8ec" strokeDasharray="2 1.500" />;
const joins = [
  <Ic s={26} v={26}><path d="M1 25C1 8 8 1 25 1V18H18V25" {...shade} />{inner}</Ic>,
  <Ic s={26} v={26}><path d="M1 25V14L14 1H25V18H18V25" {...shade} />{inner}</Ic>,
  <Ic s={26} v={26}><path d="M1 25V1H25V18H18V25" {...shade} />{inner}</Ic>,
];
const dash = <path d="M13 25V10" stroke="#eee" strokeDasharray="2 1.500" />;
const caps = [
  <Ic s={26} v={26}><path d="M4 25V11H22V25" {...shade} />{dash}</Ic>,
  <Ic s={26} v={26}><path d="M4 25V10C4 -2 22 -2 22 10V25" {...shade} />{dash}</Ic>,
  <Ic s={26} v={26}><path d="M4 25V1.500H22V25" {...shade} />{dash}</Ic>,
];
const order = (k) => {
  const c = <circle key="c" cx="11" cy="10" r="9.500" fill="#c3ccd6" stroke="#222" />;
  const f = <path key="f" d="M12 12h13v13h-13z" fill="#66788e" stroke="none" />;
  const s = <path key="s" d="M6 25V6H25V15H15V25" fill="#bbc5d0" stroke="#222" />;
  const small = <path key="m" d="M15 15h10v10h-10z" fill="#66788e" stroke="#222" />;
  const sets = [[s, small, c], [s, f, c], [c, s, small], [c, s, small], [s, c, f], [c, s, f]];
  return <Ic s={26} v={26}>{sets[k]}</Ic>;
};

function DockPanel() {
  return (
    <Dock>
      <SymbolView>
        <SymbolSheet>
          <svg width="358" height="63" viewBox="1459 78 358 63" fill={BLUE} stroke="#345" strokeWidth="1">
            <path d="M1478 78Q1487 80 1496 78M1524 78h32v2.500h-32zM1577 78C1583 83 1592 77 1608 78zM1630 78h28l2 5.500h-26zM1682 78h29l-2 4.500h-24zM1742 78h11l-5.500 10z" />
            <circle cx="1488" cy="125" r="15.500" stroke="#000" strokeWidth="1.500" />
            <path d="M1527.500 110.500H1552.500V130L1540 141L1527.500 130z" stroke="#000" strokeWidth="1.500" />
            <path d="M1583.500 110H1599V140Q1590 136 1583.500 135z" stroke="#111" />
            <path d="M1640.500 109V129L1647.500 121V141" fill="none" />
            <path d="M1687 110H1705L1687 141H1705z" />
            <path d="M1732 114.500H1764V135.500H1732z" stroke="#567" />
          </svg>
        </SymbolSheet>
        <SymbolScroll><Chevron w={1.800} /></SymbolScroll>
      </SymbolView>
      <IconRow>
        <ToolCell><Ic s={15} v={16}><circle cx="9" cy="11" r="4.500" fill="#888" stroke="#666" /><path d="M1 12h8V3M7 5l2-3l2 3" stroke="#444" /></Ic></ToolCell>
        <ToolCell><Ic s={15} v={16}><circle cx="11" cy="11" r="4.500" stroke="#a88" strokeDasharray="1.500 1.500" /><path d="M2 12h8V3M4 10l-2 2l2 2" stroke="#444" /></Ic></ToolCell>
        <Gap $w={194} />
        <ToolCell><Ic s={15} v={15}><path d="M1 1h3v3H1zM6 1h3v3H6zM11 1h3v3h-3zM1 6h3v3H1zM6 6h3v3H6zM11 6h3v3h-3zM1 11h3v3H1zM6 11h3v3H6zM11 11h3v3h-3z" fill="#dde6f0" stroke="#000" /></Ic></ToolCell>
        <ToolCell><Ic s={15} v={15}><path d="M1 1h4.500v4.500H1zM9 1h4.500v4.500H9zM1 9h4.500v4.500H1zM9 9h4.500v4.500H9z" fill="#c5d3ea" stroke="#000" /></Ic></ToolCell>
        <ToolCell $on><Ic s={16} v={16}><path d="M1 1h14v14H1z" fill="#eec9c4" stroke="#a77" strokeDasharray="2 1" /><path d="M1 1h10C11 6 8 10 1 14z" fill="#9fb0c6" stroke="#333" /><path d="M1 15C8 14 14 9 15 1" stroke="#855" /></Ic></ToolCell>
        <ToolCell><Ic s={15} v={16}><circle cx="8" cy="8" r="6.500" stroke="#a88" strokeDasharray="1.500 1.500" /><circle cx="8" cy="8" r="4" fill="#b5b5b8" stroke="#555" /></Ic></ToolCell>
        <ToolCell><Ic s={16} v={16}><circle cx="8" cy="8" r="6.800" fill="#a8abb0" stroke="#555" /></Ic></ToolCell>
      </IconRow>
      <TabRow>
        <DockTab $w={147}><Ic s={13} v={16}><path d="M1 2h10l4 3v3H5L1 5zM1 6v3l4 3h10v-3M1 10v2l4 3h10v-3" fill="#ccc" stroke="#555" /></Ic>Layers (Shift+Ctrl+L)<Tri /></DockTab>
        <DockTab $w={160} $on $g={3}><Ic s={13} v={16}><path d="M1.500 2h13v6C14.500 12 11 14 8 15.500C5 14 1.500 12 1.500 8z" fill="#dfe6ee" stroke="#333" /><path d="M8 4v8M5 8q3 3 6 0" stroke="#333" strokeWidth="2" /></Ic><span>Symbols (Shift+Ctrl+Y)</span><Tri on /></DockTab>
      </TabRow>
      <PaneHead $h={23}>
        <Ic s={13} v={16}><path d="M1 1h7l4 4V15H1z" fill="#fff" stroke="#111" /><path d="M6 9h9M12 6l3 3l-3 3" stroke="#000" /></Ic>
        <span>Export PNG Image (Shift+Ctrl+E)</span>
        <PaneBtn><svg width="5" height="6"><path d="M5 0V6L0 3z" fill="#444" /></svg></PaneBtn>
        <PaneBtn><svg width="8" height="8"><path d="M1 1L7 7M7 1L1 7" stroke="#444" strokeWidth="2" /></svg></PaneBtn>
      </PaneHead>
      <Line $h={29} $l={7}><Bold>Export area</Bold></Line>
      <Line $h={23} $l={8} $g={2}>
        <Btn $w={90} $h={23}><span><u>P</u>age</span></Btn>
        <Btn $w={90} $h={23}><span><u>D</u>rawing</span></Btn>
        <Btn $w={90} $h={23}><span><u>S</u>election</span></Btn>
        <Btn $w={91} $h={23} $on><span><u>C</u>ustom</span></Btn>
      </Line>
      <AreaGrid>
        <span><u>x</u>0:</span><Spin w={51} v="-281.319" pad={4} tight /><span>y0:</span><Spin w={51} v="713.681" />
        <span>x<u>1</u>:</span><Spin w={51} v="-280.901" pad={4} tight /><span>y<u>1</u>:</span><Spin w={51} v="714.099" />
        <span>Wid<u>t</u>h:</span><Spin w={51} v="0.418" /><span>Height:</span><Spin w={51} v="0.418" />
      </AreaGrid>
      <Line $h={23} $l={291}><FieldLabel $w={33}>Units:</FieldLabel><Combo w={52} h={21}>mm</Combo></Line>
      <Line $h={21} $l={7} $t={5}><Bold>Image size</Bold></Line>
      <SizeGrid>
        <span><u>W</u>idth:</span><Spin w={51} v="1" downOff /><span>pixels at</span><Spin w={51} v="60.82" /><span>dp<u>i</u></span>
        <span><u>H</u>eight:</span><Spin w={51} v="1" downOff /><span>pixels at</span><Spin w={51} v="60.82" off /><Dim $off>dpi</Dim>
      </SizeGrid>
      <Line $h={23} $l={7} $t={1}><Bold><u>F</u>ilename</Bold></Line>
      <Line $h={28} $l={7} $g={10}>
        <FileEntry>\Users\LabVIEW\Desktop\text14715-3-8-03-4.png</FileEntry>
        <Btn $w={89} $h={28}>
          <Ic s={17} v={17}><path d="M1 1h11v13H1z" fill="#f6f6f0" stroke="#aaa" /><path d="M3 4h7M3 7h4M3 10h3" stroke="#bbb" /><path d="M8 6v5l-2-1v3l3 3h6l1-6l-6-1V6z" fill="#f1b97a" stroke="#c98a45" /></Ic>
          <span><u>E</u>xport As...</span>
        </Btn>
      </Line>
      <Line $h={26} $l={6} $g={6} $t={4}><Check $off /><Dim $off>B<u>a</u>tch export 33 selected objects</Dim></Line>
      <Line $h={20} $l={6} $g={6}><Check /><span>Hide a<u>l</u>l except selected</span></Line>
      <Progress />
      <Line $h={32} $l={9} $t={4}>
        <Check /><Gap $w={6} /><span>Close when complete</span><Gap $w={168} />
        <Btn $w={64} $h={28}>
          <Ic s={19} v={19}><path d="M1 11L5 9L8 12L14 1L18 2L9 18z" fill="#7fd03c" stroke="#3d7d18" /></Ic>
          <span><u>E</u>xport</span>
        </Btn>
      </Line>
      <PaneRule />
      <PaneHead>
        <Ic s={13} v={16}><path d="M1 1.500h14L8 14.500H1z" fill="#eee" stroke="#111" strokeWidth="1.600" /><path d="M5 15L15 3V9L9 14z" fill="#222" stroke="none" /></Ic>
        <span>Fill and Stroke (Shift+Ctrl+F)</span>
        <PaneBtn><svg width="5" height="6"><path d="M5 0V6L0 3z" fill="#444" /></svg></PaneBtn>
        <PaneBtn><svg width="8" height="8"><path d="M1 1L7 7M7 1L1 7" stroke="#444" strokeWidth="2" /></svg></PaneBtn>
      </PaneHead>
      <NoteTabs>
        <NoteTab $w={40}><svg width="10" height="10"><path d="M1 1h9v9h-9z" fill="#b8cfe6" /></svg><span><u>F</u>ill</span></NoteTab>
        <NoteTab $w={87}><svg width="10" height="10"><path d="M1 1h8v8h-8z" fill="#fff" stroke="#777" /></svg><span>Stroke paint</span></NoteTab>
        <NoteTab $w={86} $on><svg width="10" height="10"><path d="M0 1.500h9M0 5h9M0 8.500h9" stroke="#222" strokeDasharray="4 1" /></svg><span>Stroke st<u>y</u>le</span></NoteTab>
      </NoteTabs>
      <Notebook>
        <StyleRow $h={27}><StyleLabel><u>W</u>idth:</StyleLabel><Spin w={58} v="0.000" off /><Gap $w={4} /><Combo w={52} h={22} off>mm</Combo></StyleRow>
        <StyleRow $h={27}><StyleLabel>Dashes:</StyleLabel><Combo w={106} h={22} off><svg width="80" height="3"><path d="M0 1.500H80" stroke="#000" strokeWidth="1.500" /></svg></Combo><Spin w={38} v="0.00" off /></StyleRow>
        <StyleRow $h={29}><StyleLabel>Markers:</StyleLabel><Combo w={76} h={26} off><Ln /></Combo><Gap $w={4} /><Combo w={76} h={26} off><Ln /></Combo><Gap $w={4} /><Combo w={78} h={26} off><Ln /></Combo></StyleRow>
        <Gap $h={5} />
        <StyleRow $h={38}><StyleLabel $r={5}>Join:</StyleLabel>{joins.map((j, i) => <Shade key={i}>{j}</Shade>)}<Spin w={45} v="4.00" off /></StyleRow>
        <StyleRow $h={38}><StyleLabel $r={5}>Cap:</StyleLabel>{caps.map((j, i) => <Shade key={i}>{j}</Shade>)}</StyleRow>
        <StyleRow $h={38}><StyleLabel $r={5}>Order:</StyleLabel>{[0, 1, 2].map((k) => <Shade key={k}>{order(k)}</Shade>)}</StyleRow>
        <StyleRow $h={38}><StyleLabel $r={5} />{[3, 4, 5].map((k) => <Shade key={k}>{order(k)}</Shade>)}</StyleRow>
      </Notebook>
      <SliderRow $t={4}><SliderBody><span>Blur (%)</span>0.0</SliderBody><SpinCol><SpinBtn $off><Up /></SpinBtn><SpinBtn $off><Down /></SpinBtn></SpinCol></SliderRow>
      <SliderRow $t={4}><SliderBody $on><span>Opacity (%)</span>97<i>0</i></SliderBody><SpinCol><SpinBtn $off><Up /></SpinBtn><SpinBtn $off><Down /></SpinBtn></SpinCol></SliderRow>
    </Dock>
  );
}

const CommandColumn = styled.div`
  width: ${(p) => (p.$snap ? 32 : 30)}px;
  padding: 2px 0 0 4px;
  background: #fff;
  flex: none;
`;
const CmdSlot = styled.div`
  width: 26px;
  height: 26px;
  display: flex;
  align-items: center;
  justify-content: center;
  ${(p) => p.$on && css`background: #cce8ff; border: 1px solid #99cdf5;`}
`;
const CmdSep = styled.div`
  width: 16px;
  height: 12px;
  padding-top: 5px;
  margin: 0 5px;
  &::after { content: ""; display: block; height: 1px; background: #a0a0a0; }
`;

/* ---------- palette ---------- */
const PALETTE = (
  "000 1a1a1a 333 4d4d4d 666 808080 999 b3b3b3 ccc e6e6e6 ececec f2f2f2 f9f9f9 fff " +
  "800000 f00 808000 ff0 008000 0f0 008080 0ff 000080 00f 800080 f0f " +
  "2b0000 550000 800000 a00 d40000 f00 ff2a2a f55 ff8080 faa ffd5d5 280b0b 501616 782121 a02c2c c83737 d35f5f de8787 e9afaf f4d7d7 241c1c 483737 6c5353 916f6f ac9393 c8b7b7 e3dbdb " +
  "2b1100 520 803300 a40 d45500 f60 ff7f2a f95 ffb380 fca ffe6d5 28170b 502d16 784421 a05a2c c87137 d38d5f deaa87 e9c6af f4e3d7 241f1c 483e37 6c5d53 917c6f ac9d93 c8beb7 e3dedb " +
  "2b2200 540 806600 a80 d4aa00 fc0 ffd42a fd5 ffe680 fea fff6d5 28220b 504416 786721 a0892c c8ab37 d3bc5f decd87 e9ddaf f4eed7 24221c 484537 6c6753 918a6f aca793 c8c4b7 e3e2db " +
  "222b00 450 668000 8a0 aad400 cf0 d4ff2a df5 e5ff80 efa f6ffd5 22280b 445016 677821 89a02c abc837 bcd35f cdde87 dde9af eef4d7 22241c 454837 676c53 8a916f a7ac93 c4c8b7 e2e3db 112b00"
).split(" ");
const PaletteBar = styled.div`
  height: 19px;
  display: flex;
  background: #fff;
  flex: none;
`;
const Swatches = styled.div`
  width: 1909px;
  height: 16px;
  border-top: 2px solid #111;
  display: flex;
`;
const NoneBox = styled.div`
  width: 16px;
  border-left: 1px solid #111;
`;
const Swatch = styled.div`
  flex: 1;
  background: ${(p) => p.$c};
`;
const PaletteScroll = styled.div`
  height: 15px;
  display: flex;
  align-items: center;
  background: #f0f0f0;
  color: #444;
  flex: none;
`;
const Faint = styled.div`
  color: #aaa;
`;

/* ---------- status bar ---------- */
const StatusBar = styled.div`
  height: 29px;
  background: #f0f0f0;
  display: flex;
  align-items: center;
  flex: none;
`;
const Stack = styled.div`
  width: ${(p) => p.$w}px;
  display: flex;
  flex-direction: column;
  line-height: 14px;
  flex: none;
  white-space: pre;
`;
const Coord = styled.div`
  display: flex;
  justify-content: space-between;
  letter-spacing: -0.8px;
  & > span:last-child { font: 12px/14px "Liberation Mono", monospace; letter-spacing: -0.4px; }
`;
const Message = styled.div`
  flex: 1;
  padding-left: 2px;
  letter-spacing: -0.235px;
`;

/* ---------- task bar ---------- */
const TaskBar = styled.div`
  height: 40px;
  background: #1c1c1d;
  display: flex;
  color: #fff;
  flex: none;
`;
const Task = styled.div`
  width: ${(p) => p.$w || 49}px;
  height: 40px;
  display: flex;
  align-items: center;
  justify-content: center;
  flex: none;
  background: ${(p) => (p.$active ? "#464646" : "none")};
  ${(p) => p.$open && css`box-shadow: inset 0 -2px #9fcbf0; margin: 0 4.5px;`}
  ${(p) => p.$active && css`margin: 0;`}
`;
const Tray = styled.div`
  margin-left: auto;
  display: flex;
  align-items: center;
`;
const Clock = styled.div`
  width: 62px;
  text-align: center;
  line-height: 17px;
  margin: 0 14px 0 7px;
`;
const DesktopEdge = styled.div`
  width: 1px;
  height: 40px;
  background: #555;
  margin-right: 3px;
`;

const menus = [["File", 0, 32], ["Edit", 0, 34], ["View", 0, 39], ["Layer", 0, 42], ["Object", 0, 49], ["Path", 0, 38], ["Text", 0, 36], ["Filters", 6, 45], ["Extensions", 5, 69], ["Help", 0, 30]];

export default function App() {
  const k = ctlIcons;
  return (
    <Window>
      <Global />
      <TitleBar>
        <InkLogo s={17} />*dqq.svg - Inkscape
        <WindowButtons>
          <svg width="12" height="12"><path d="M1 6.500h10" stroke="#111" /></svg>
          <svg width="12" height="12" fill="none" stroke="#111"><path d="M1.500 3.500h7v7h-7zM3.500 3V1.500h7v7H9" /></svg>
          <svg width="12" height="12"><path d="M1 1L11 11M11 1L1 11" stroke="#111" /></svg>
        </WindowButtons>
      </TitleBar>
      <MenuBar>
        {menus.map(([t, i, w]) => <MenuItem key={t} $w={w}>{t.slice(0, i)}<u>{t[i]}</u>{t.slice(i + 1)}</MenuItem>)}
      </MenuBar>
      <ControlsBar>
        <ToolCell>{k.page}</ToolCell><ToolCell>{k.sel1}</ToolCell><ToolCell>{k.sel2}</ToolCell>
        <VSep $l={5} $r={6} />
        <ToolCell>{k.rotL}</ToolCell><ToolCell>{k.rotR}</ToolCell><ToolCell>{k.flipH}</ToolCell><ToolCell>{k.flipV}</ToolCell>
        <VSep $l={5} $r={6} />
        <ToolCell>{k.low2}</ToolCell><ToolCell>{k.low1}</ToolCell><ToolCell>{k.up1}</ToolCell><ToolCell>{k.up2}</ToolCell>
        <VSep $l={5} $r={13} />
        <FieldLabel $w={15}>X:</FieldLabel><Spin w={45} h={20} v="-426.02" off />
        <Gap $w={8} /><FieldLabel $w={14}>Y:</FieldLabel><Spin w={44} h={20} v="613.668" off pad={2} tight />
        <Gap $w={10} /><FieldLabel $w={19}>W:</FieldLabel><Spin w={46} h={20} v="13.937" off />
        <Gap $w={8} />{k.lock}<Gap $w={15} />
        <FieldLabel $w={16}>H:</FieldLabel><Spin w={45} h={20} v="4.700" off />
        <Combo w={44} h={20}>mm</Combo>
        <VSep $l={5} $r={6} />
        <ToolCell $on>{k.sc1}</ToolCell><ToolCell>{k.sc2}</ToolCell><ToolCell $on>{k.sc3}</ToolCell><ToolCell>{k.sc4}</ToolCell>
      </ControlsBar>

      <Workspace>
        <ToolBox>{toolIcons.map((t, i) => <ToolSlot key={i} $on={i === 0}>{t}</ToolSlot>)}</ToolBox>
        <CanvasColumn>
          <TopRuler />
          <CanvasRow><SideRuler /><Sheet><Chart /></Sheet></CanvasRow>
          <HScroll $l={21}>
            <Chevron d="left" w={1.800} /><Gap $w={465} /><Thumb $w={304} $h={15} /><Gap $w={584} /><Chevron d="right" w={1.800} />
          </HScroll>
        </CanvasColumn>
        <VScroll $w={17}>
          <ZoomToggle><Ic s={11} v={12}><circle cx="5" cy="5" r="3.800" fill="#cde" stroke="#567" /><path d="M8 8l3.500 3.500" stroke="#567" strokeWidth="1.800" /></Ic></ZoomToggle>
          <Gap $h={5} /><Chevron d="up" w={1.800} /><Gap $h={9} />
          <Thumb $w={15} $h={183} /><Gap $h={650} /><Chevron w={1.800} /><Gap $h={8} />
          <Ic s={9} v={12}><path d="M1 1L7 2L11 7L5 11z" fill="#8a9" stroke="#687" strokeDasharray="1.500 1" /></Ic>
        </VScroll>
        <DockPanel />
        <VScroll $w={16}>
          <Gap $h={5} /><Chevron d="up" w={1.800} /><Gap $h={149} />
          <Thumb $w={15} $h={703} /><Gap $h={22} /><Chevron w={1.800} />
        </VScroll>
        <CommandColumn>{cmdIcons.map((c, i) => (c ? <CmdSlot key={i}>{c}</CmdSlot> : <CmdSep key={i} />))}</CommandColumn>
        <CommandColumn $snap>{snapIcons.map((c, i) => (c ? <CmdSlot key={i} $on={c[1]}>{c[0]}</CmdSlot> : <CmdSep key={i} />))}</CommandColumn>
      </Workspace>

      <PaletteBar>
        <Swatches>
          <NoneBox><svg width="15" height="14"><path d="M1 1L14 13M14 1L1 13" stroke="#802030" strokeWidth="1.400" /></svg></NoneBox>
          {PALETTE.map((c, i) => <Swatch key={i} $c={"#" + c} />)}
        </Swatches>
        <svg width="9" height="12"><path d="M7 0V8L2.500 4z" fill="#000" /></svg>
      </PaletteBar>
      <PaletteScroll><Gap $w={4} /><Faint><Chevron d="left" /></Faint><Gap $w={4} /><Thumb $w={591} $h={14} /><Gap $w={1290} /><Chevron d="right" w={2} /></PaletteScroll>

      <StatusBar>
        <Gap $w={2} />
        <Stack $w={70}><span>Fill:</span><span>Stroke:</span></Stack>
        <Stack $w={55}><span>N/A</span><span>N/A</span></Stack>
        <FieldLabel $w={13}>O:</FieldLabel><Spin w={36} h={20} v="97" off />
        <VSep $l={4} $r={7} $h={27} />
        <Ic s={10} v={14}><path d="M1 8C4 4 10 4 13 8C10 12 4 12 1 8zM3 3l1 2M7 2v2M11 3l-1 2" fill="#999" stroke="#333" /><circle cx="7" cy="8" r="2.500" fill="#111" stroke="none" /></Ic>
        <Gap $w={9} />{k.lock}<Gap $w={4} />
        <Combo w={72} h={27}><Bold $small>•Layer 1</Bold></Combo>
        <Message>No objects selected. Click, Shift+click, Alt+scroll mouse on top of objects, or drag around objects to select.</Message>
        <VSep $l={0} $r={3} $h={28} />
        <Stack $w={60}>
          <Coord><span>X:</span><span>-355.47</span></Coord>
          <Coord><span>Y:</span><span>625.14</span></Coord>
        </Stack>
        <Gap $w={9} />
        <FieldLabel $w={12}>Z:</FieldLabel><Spin w={46} h={20} v="99%" pad={8} /><Gap $w={1} />
      </StatusBar>

      <TaskBar>
        <Task $w={48}><svg width="16" height="16"><path d="M0 2.300L7 1.300V7.500H0zM8 1.100L16 0V7.500H8zM0 8.500H7V14.700L0 13.700zM8 8.500H16V16L8 14.900z" fill="#fff" /></svg></Task>
        <Task $w={48}><svg width="17" height="17" fill="none" stroke="#fff" strokeWidth="1.300"><circle cx="10" cy="6.500" r="5.500" /><path d="M6 10.500L1 16" /></svg></Task>
        <Task $w={49}><svg width="17" height="16" fill="none" stroke="#fff"><path d="M1 1v2h9V1M1 15v-2h9v2M1.500 5.500h8.500v5H1.500zM14 0v16" /><path d="M12.500 4h3v3h-3z" fill="#fff" stroke="none" /></svg></Task>
        <Gap $w={1.500} />
        <Task $w={40} $open>
          <svg width="24" height="24"><circle cx="12" cy="12.500" r="10.500" fill="#ff6a2a" /><path d="M2 10C4 2 9 6 14 1C14 6 22 5 22.500 13C22 20 16 23 12 23C20 18 19 10 13 8z" fill="#ffc13a" /><circle cx="11.500" cy="13.500" r="5" fill="#6a3bc4" /><path d="M3 8C8 6 10 9 9 11C6 11 5 14 8 17C4 17 1 13 3 8z" fill="#ff3d52" /></svg>
        </Task>
        <Task $w={40} $open>
          <svg width="26" height="26"><circle cx="12" cy="11.500" r="11" fill="#e04435" /><path d="M2.500 6L12 23A11 11 0 0 1 2.500 6z" fill="#2ea04f" /><path d="M12 22.500L17 11L23 10A11 11 0 0 1 12 22.500z" fill="#f7c52d" /><circle cx="12" cy="11.500" r="5" fill="#4285f4" stroke="#fff" strokeWidth="1.500" /><circle cx="18.500" cy="18.500" r="7" fill="#0a0a0a" /><path d="M15.500 16h6v4l-3 3l-3-3z" fill="#ddd" /><path d="M16 17.500h2M19.500 17.500h2" stroke="#000" /></svg>
        </Task>
        <Task $w={40} $open>
          <svg width="24" height="22"><path d="M1 2h8l2 2h12v17H1z" fill="#f5cf6a" /><path d="M1 6h22v15H1z" fill="#fbe08f" /><path d="M5 21V13h14v8h-4v-4H9v4z" fill="#3f9fe0" /></svg>
        </Task>
        <Task $w={40} $open>
          <svg width="24" height="24"><path d="M8 2h15v20H8z" fill="#f4f7fb" /><path d="M17 5h5M17 8h5M17 11h5M17 14h5" stroke="#9db8dd" /><path d="M1 3L16 0.500V20L1 18z" fill="#2a5caa" /><text x="2.500" y="15" fontFamily='"Liberation Sans", sans-serif' fontWeight="700" fontSize="13" fill="#fff">W</text></svg>
        </Task>
        <Task $w={48} $open $active><InkLogo s={24} /></Task>
        <Task $w={40} $open>
          <svg width="24" height="24"><path d="M2 1h21v22H2z" fill="#6a6a6a" /><path d="M1 4L18 12L1 20z" fill="#f6d02a" /><path d="M17 12h7M4 12h5M6.500 9.500v5" stroke="#3a6fb5" strokeWidth="1.500" /><text x="14" y="22" fontFamily={UI} fontSize="7" fill="#ddd">19</text></svg>
        </Task>
        <Task $w={40} $open>
          <svg width="22" height="24"><path d="M0.500 1h21v22h-21z" fill="#e8eef5" stroke="#3973b5" /><path d="M1 1h20v3H1z" fill="#2f6cb3" /><path d="M4 6h14v13H4z" fill="#333" /><path d="M6 7.500L17 12.500L6 17.500z" fill="#f6e02a" /><path d="M3 21h16" stroke="#567" strokeDasharray="2 1" /></svg>
        </Task>
        <Tray>
          <svg width="14" height="10"><path d="M1.500 8.500L7 3L12.500 8.500" fill="none" stroke="#fff" strokeWidth="1.300" /></svg>
          <Gap $w={9} />
          <svg width="17" height="14" fill="none" stroke="#fff"><path d="M4.500 4.500h10v7h-10z" /><path d="M6 6h7v4H6z" fill="#fff" /><path d="M15.500 6v4M1 2v3h3V2M2.500 5v6" /></svg>
          <Gap $w={8} />
          <svg width="16" height="14" fill="none" strokeWidth="1.300"><path d="M2 13A11 11 0 0 1 13 2" stroke="#888" /><path d="M5 13A8 8 0 0 1 13 5M8 13A5 5 0 0 1 13 8" stroke="#fff" /><circle cx="12" cy="12" r="1.500" fill="#fff" /></svg>
          <Gap $w={7} />
          <svg width="17" height="14" fill="none" stroke="#fff"><path d="M1 5h3l4-4v12l-4-4H1zM10 5q1.500 2 0 4M12 3.500q2.500 3.500 0 7" /><path d="M14 2q4 5 0 10" stroke="#888" /></svg>
          <Gap $w={10} />ENG
          <Clock>09:10{"\n"}1/10/2020</Clock>
          <svg width="17" height="17"><path d="M1 1.500h15v11.500h-4l-3.500 3.500v-3.500H1z" fill="none" stroke="#fff" strokeWidth="1.200" /></svg>
          <Gap $w={20} /><DesktopEdge />
        </Tray>
      </TaskBar>
    </Window>
  );
}
